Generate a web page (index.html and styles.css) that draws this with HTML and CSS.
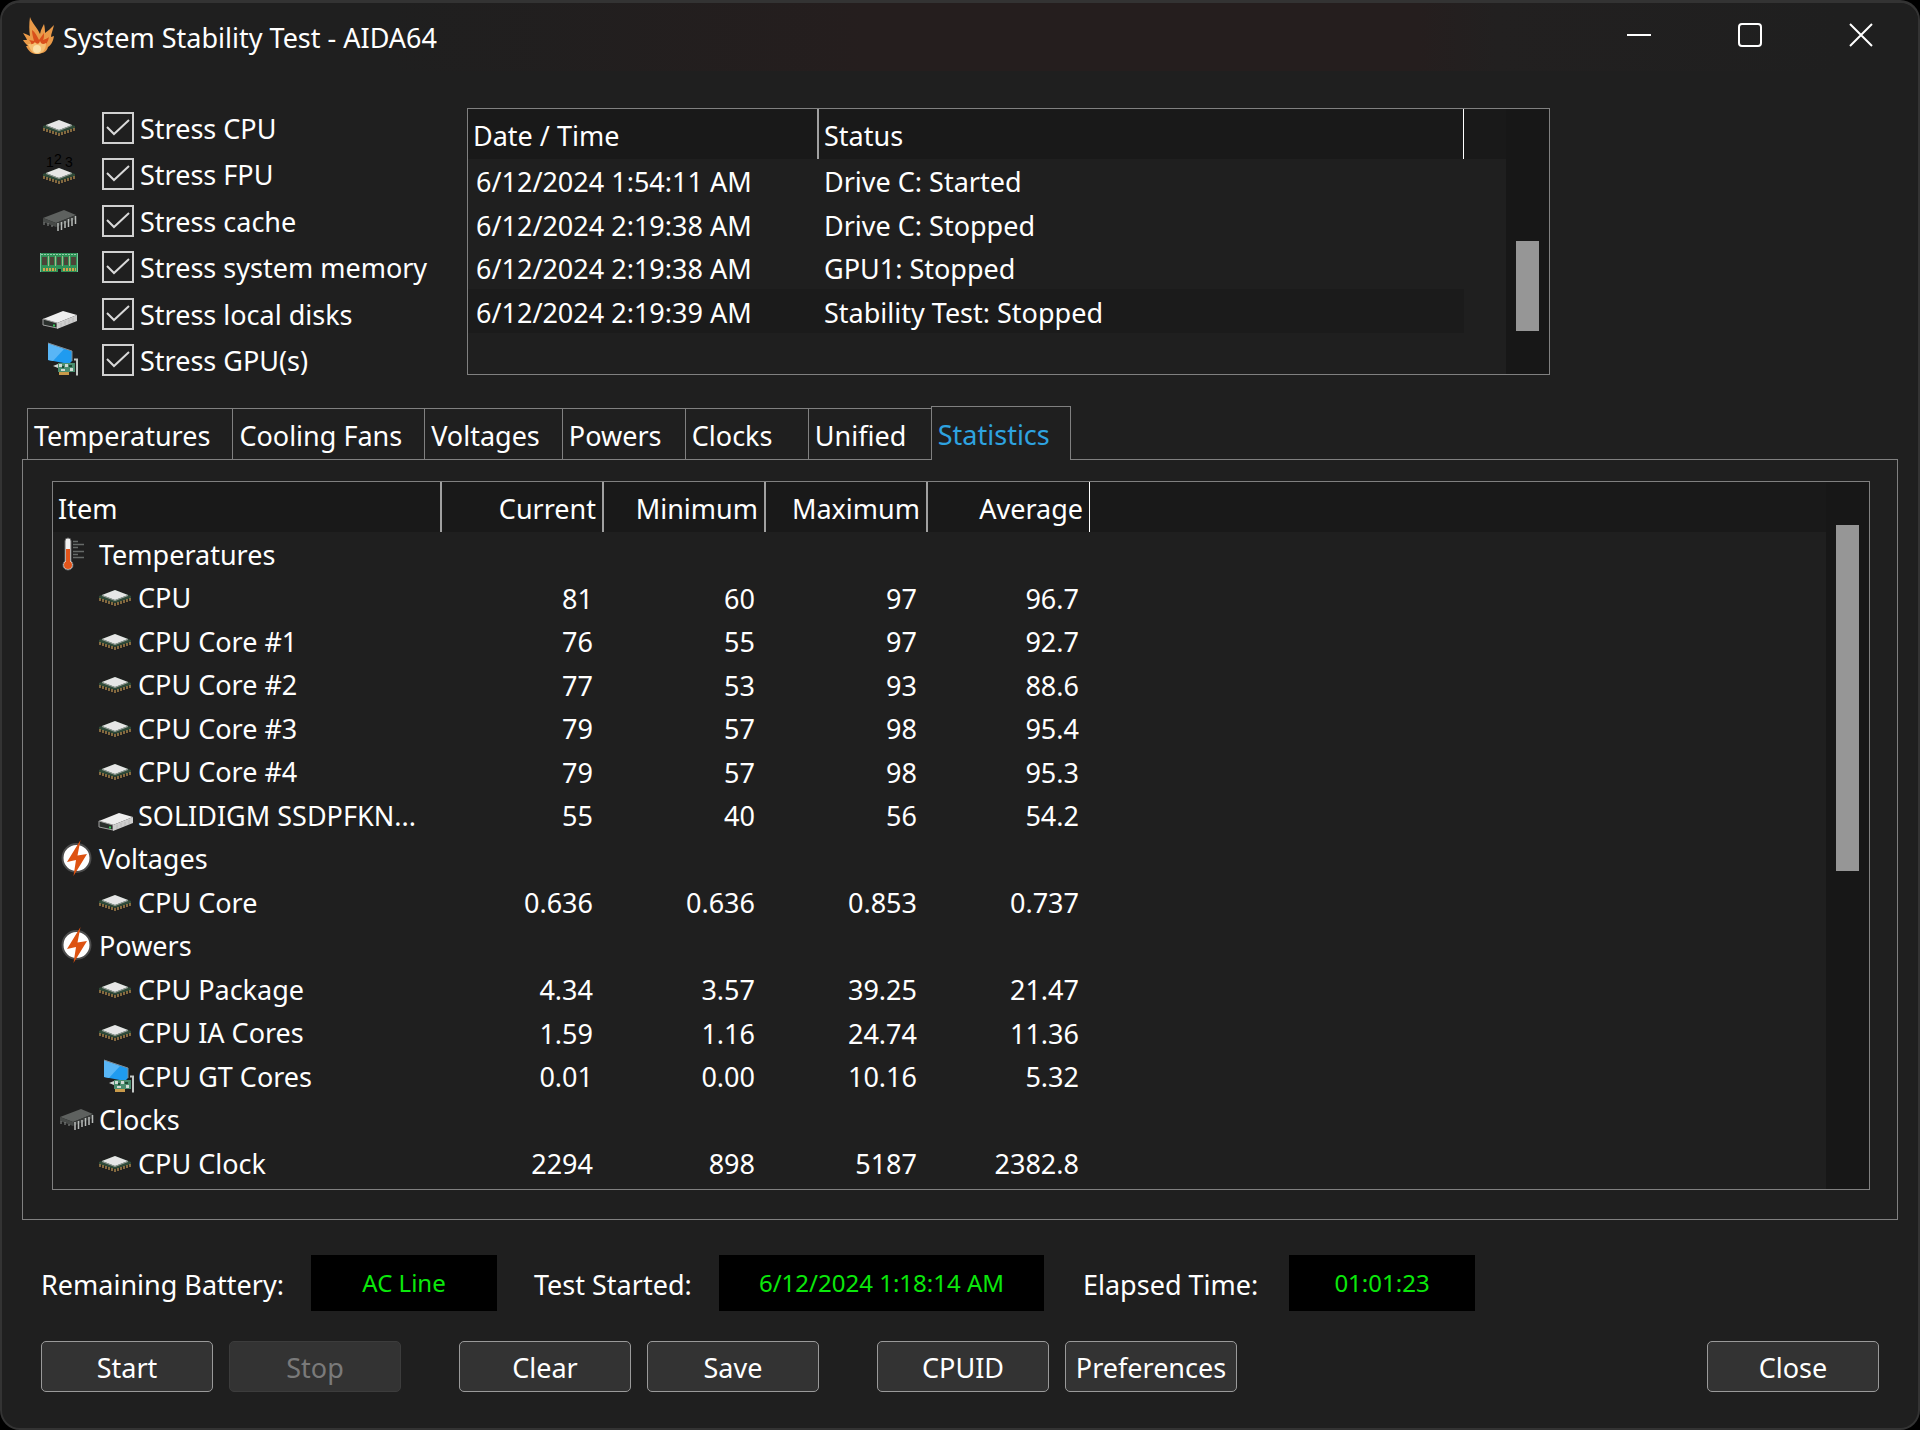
FILE: index.html
```html
<!DOCTYPE html>
<html lang="en">

<head>
  <meta charset="UTF-8">
  <meta name="viewport" content="width=device-width, initial-scale=1.0">
  <title>System Stability Test - AIDA64</title>
  <link rel="stylesheet" href="styles.css">
</head>

<body>
  <!-- shared icons -->
  <svg class="sprite" aria-hidden="true">
    <symbol id="cpu" viewBox="0 0 40 40">
      <path d="M4 18 L20 12 L36 18 L36 20 L20 25 L4 20Z" fill="#2f4a38" />
      <path d="M5 20v3M8 21v3M11 22v3M14 23v3M17 24v3M20 25v3M23 24v3M26 23v3M29 22v3M32 21v3M35 20v3" stroke="#c69a55" stroke-width="1.2" />
      <path d="M7 17 L20 12 L33 17 L20 22Z" fill="#e6e6e6" />
      <path d="M7 17 L20 22 L33 17 V18 L20 23 L7 18Z" fill="#9aa09c" />
    </symbol>
    <symbol id="fpu" viewBox="0 0 40 40">
      <text x="7" y="13" class="fpu-digit">1</text>
      <text x="15" y="10" class="fpu-digit">2</text>
      <text x="26" y="13" class="fpu-digit">3</text>
      <use href="#cpu" x="0" y="2" width="40" height="40" />
    </symbol>
    <symbol id="chip" viewBox="0 0 40 40">
      <path d="M4 17 L25 9 L37 14 L17 22Z" fill="#5e615f" />
      <path d="M4 17 L17 22 V26 L4 21Z" fill="#474a48" />
      <path d="M17 22 L37 14 V18 L17 26Z" fill="#3a3c3b" />
      <path d="M19 22v8M22.500 21v8M26 20v7M29.500 18v8M33 17v8M36.500 15v8" stroke="#b9bcba" stroke-width="1.500" />
      <path d="M5 21v3M9 22v3M13 24v2" stroke="#8b8e8c" />
    </symbol>
    <symbol id="ram" viewBox="0 0 40 40">
      <path d="M1 6 H39 V25 H22 V22 H19 V25 H1Z" fill="#2f9257" />
      <path d="M2 7.500H38" stroke="#8fceaa" stroke-dasharray="2 1" />
      <path d="M3 10h5v8h-5zM11 10h4v8h-4zM18 10h4v8h-4zM25 10h4v8h-4zM32 10h5v8h-5z" fill="#4c4438" />
      <path d="M9.500 9v10M16.500 9v10M23.500 9v10M30.500 9v10" stroke="#a3b88c" />
      <path d="M4 22.500h13M24 22.500h13" stroke="#d2a24c" stroke-width="3" stroke-dasharray="2 1" />
      <path d="M1.500 6V25M38.500 6V25" stroke="#74c59a" />
    </symbol>
    <symbol id="disk" viewBox="0 0 40 40">
      <path d="M4 25 L24 17 L38 21 L18 29Z" fill="#eeeeee" />
      <path d="M4 25 L18 29 V34 L4 31Z" fill="#2a2f2c" stroke="#a2a2a2" />
      <path d="M18 29 L38 21 V27 L18 35Z" fill="#cdcdcd" />
      <path d="M22 29v4M26 27v4M30 26v4M34 24v4" stroke="#b8b8b8" />
      <path d="M14 31.500h2" stroke="#38c85a" stroke-width="2" />
    </symbol>
    <symbol id="gpu" viewBox="0 0 40 40">
      <path d="M9 3 L33 11 V21 L30 24 L9 20Z" fill="#1f9bf0" />
      <path d="M9 3 L25 9 L14 21 L9 20Z" fill="#59b6f6" />
      <path d="M9 3 L33 11 V21" fill="none" stroke="#7f8b93" />
      <path d="M14 26 l5-2 v4z" fill="#d3d8d5" />
      <path d="M19 23h17v9h-17z" fill="#4b8d6f" />
      <path d="M20 24h3v3h-3zM26 24h3v3h-3zM31 28h3v3h-3zM22 29h4v2h-4z" fill="#cfdad4" />
      <path d="M23 27h2M30 26h3" stroke="#1f4a34" stroke-width="2" />
      <path d="M20 33.500h10" stroke="#c99a4a" stroke-width="3" />
      <path d="M35 19.500h3 V35.500" fill="none" stroke="#c4c8c6" stroke-width="2" />
    </symbol>
    <symbol id="thermo" viewBox="0 0 40 40">
      <path d="M9 6 a3 3 0 0 1 6 0 V26 a5 5 0 1 1 -6 0Z" fill="#f1f1f1" stroke="#6b6b6b" />
      <path d="M12 14V29" stroke="#e2551b" stroke-width="4" />
      <circle cx="12" cy="30" r="4" fill="#e2551b" />
      <path d="M17 6.500h5M17 9.500h11M17 12.500h5M17 16.500h11M17 19.500h5M17 22.500h11" stroke="#666a68" stroke-width="1.500" />
    </symbol>
    <symbol id="bolt" viewBox="0 0 40 40">
      <circle cx="20.500" cy="19" r="14" fill="#fff" stroke="#4c4c4c" stroke-width="2" />
      <path d="M24.500 1 L11 23 L20 21 L17.500 37 L31 15 L21.500 16.500Z" fill="#dd5211" />
    </symbol>
  </svg>

  <div class="window">
    <header class="titlebar">
      <svg class="flame" viewBox="0 0 34 40" aria-hidden="true">
        <path d="M8 0 C10 6 15 10 18 17 C19 12 21 9 22 7 C23 11 23 14 23 16 C26 14 29 11 32 8 C31 13 29 17 29 20 L32 19 C31 25 29 28 26 30 C25 35 20 37 14 37 C9 37 6 33 4 29 L6 29 C4 27 2 25 1 23 L5 23 C4 20 2 18 1 16 C4 17 6 18 8 19 C7 13 7 7 8 0Z" fill="#ea9a48" />
        <path d="M10 13 C13 15 15 19 17 23 L22 16 C22 19 22 21 21 23 C24 22 26 21 27 20 C26 25 24 28 21 29 L9 29 C10 27 9 25 7 23 L12 24 C11 20 10 17 10 13Z" fill="#d94f1b" />
        <path d="M6 27 C9 27 11 28 13 25 C14 27 17 28 18 24 C19 27 21 28 24 26 C24 33 20 37 15 37 C10 36 8 32 6 27Z" fill="#f6be70" />
        <circle cx="15" cy="32" r="4" fill="#fbe0a8" />
      </svg>
      <h1>System Stability Test - AIDA64</h1>
      <div class="window-controls">
        <button type="button" aria-label="Minimize">
          <svg viewBox="0 0 24 24"><path d="M0 12H24" /></svg>
        </button>
        <button type="button" aria-label="Maximize">
          <svg viewBox="0 0 24 24"><rect x="1" y="1" width="22" height="22" rx="3" /></svg>
        </button>
        <button type="button" aria-label="Close window">
          <svg viewBox="0 0 24 24"><path d="M1 1L23 23M23 1L1 23" /></svg>
        </button>
      </div>
    </header>

    <section class="top">
      <div class="stress-list">
        <div class="stress">
          <svg class="icon"><use href="#cpu" /></svg>
          <input type="checkbox" id="s-cpu" checked><label for="s-cpu">Stress CPU</label>
        </div>
        <div class="stress">
          <svg class="icon"><use href="#fpu" /></svg>
          <input type="checkbox" id="s-fpu" checked><label for="s-fpu">Stress FPU</label>
        </div>
        <div class="stress">
          <svg class="icon"><use href="#chip" /></svg>
          <input type="checkbox" id="s-cache" checked><label for="s-cache">Stress cache</label>
        </div>
        <div class="stress">
          <svg class="icon"><use href="#ram" /></svg>
          <input type="checkbox" id="s-mem" checked><label for="s-mem">Stress system memory</label>
        </div>
        <div class="stress">
          <svg class="icon"><use href="#disk" /></svg>
          <input type="checkbox" id="s-disk" checked><label for="s-disk">Stress local disks</label>
        </div>
        <div class="stress">
          <svg class="icon"><use href="#gpu" /></svg>
          <input type="checkbox" id="s-gpu" checked><label for="s-gpu">Stress GPU(s)</label>
        </div>
      </div>

      <div class="list log">
        <table>
          <colgroup>
            <col class="col-date">
            <col class="col-status">
            <col>
          </colgroup>
          <thead>
            <tr><th>Date / Time</th><th>Status</th><td></td></tr>
          </thead>
          <tbody>
            <tr><td>6/12/2024 1:54:11 AM</td><td>Drive C: Started</td></tr>
            <tr><td>6/12/2024 2:19:38 AM</td><td>Drive C: Stopped</td></tr>
            <tr><td>6/12/2024 2:19:38 AM</td><td>GPU1: Stopped</td></tr>
            <tr class="selected"><td>6/12/2024 2:19:39 AM</td><td>Stability Test: Stopped</td></tr>
          </tbody>
        </table>
        <div class="scrollbar"><div class="thumb"></div></div>
      </div>
    </section>

    <div class="tabs" role="tablist">
      <button type="button" role="tab">Temperatures</button>
      <button type="button" role="tab">Cooling Fans</button>
      <button type="button" role="tab">Voltages</button>
      <button type="button" role="tab">Powers</button>
      <button type="button" role="tab">Clocks</button>
      <button type="button" role="tab">Unified</button>
      <button type="button" role="tab" class="active" aria-selected="true">Statistics</button>
    </div>

    <main class="panel" role="tabpanel">
      <div class="list stats">
        <table>
          <colgroup>
            <col class="col-item">
            <col class="col-num">
            <col class="col-num">
            <col class="col-num">
            <col class="col-num">
            <col>
          </colgroup>
          <thead>
            <tr><th>Item</th><th>Current</th><th>Minimum</th><th>Maximum</th><th>Average</th><td></td></tr>
          </thead>
          <tbody>
            <tr class="group"><td><div class="item"><svg class="icon"><use href="#thermo" /></svg>Temperatures</div></td></tr>
            <tr><td><div class="item"><svg class="icon"><use href="#cpu" /></svg>CPU</div></td><td>81</td><td>60</td><td>97</td><td>96.7</td></tr>
            <tr><td><div class="item"><svg class="icon"><use href="#cpu" /></svg>CPU Core #1</div></td><td>76</td><td>55</td><td>97</td><td>92.7</td></tr>
            <tr><td><div class="item"><svg class="icon"><use href="#cpu" /></svg>CPU Core #2</div></td><td>77</td><td>53</td><td>93</td><td>88.6</td></tr>
            <tr><td><div class="item"><svg class="icon"><use href="#cpu" /></svg>CPU Core #3</div></td><td>79</td><td>57</td><td>98</td><td>95.4</td></tr>
            <tr><td><div class="item"><svg class="icon"><use href="#cpu" /></svg>CPU Core #4</div></td><td>79</td><td>57</td><td>98</td><td>95.3</td></tr>
            <tr><td><div class="item"><svg class="icon"><use href="#disk" /></svg>SOLIDIGM SSDPFKN...</div></td><td>55</td><td>40</td><td>56</td><td>54.2</td></tr>
            <tr class="group"><td><div class="item"><svg class="icon"><use href="#bolt" /></svg>Voltages</div></td></tr>
            <tr><td><div class="item"><svg class="icon"><use href="#cpu" /></svg>CPU Core</div></td><td>0.636</td><td>0.636</td><td>0.853</td><td>0.737</td></tr>
            <tr class="group"><td><div class="item"><svg class="icon"><use href="#bolt" /></svg>Powers</div></td></tr>
            <tr><td><div class="item"><svg class="icon"><use href="#cpu" /></svg>CPU Package</div></td><td>4.34</td><td>3.57</td><td>39.25</td><td>21.47</td></tr>
            <tr><td><div class="item"><svg class="icon"><use href="#cpu" /></svg>CPU IA Cores</div></td><td>1.59</td><td>1.16</td><td>24.74</td><td>11.36</td></tr>
            <tr><td><div class="item"><svg class="icon"><use href="#gpu" /></svg>CPU GT Cores</div></td><td>0.01</td><td>0.00</td><td>10.16</td><td>5.32</td></tr>
            <tr class="group"><td><div class="item"><svg class="icon"><use href="#chip" /></svg>Clocks</div></td></tr>
            <tr><td><div class="item"><svg class="icon"><use href="#cpu" /></svg>CPU Clock</div></td><td>2294</td><td>898</td><td>5187</td><td>2382.8</td></tr>
          </tbody>
        </table>
        <div class="scrollbar"><div class="thumb"></div></div>
      </div>
    </main>

    <footer>
      <div class="status">
        <span class="label-battery">Remaining Battery:</span>
        <output class="short">AC Line</output>
        <span class="label-started">Test Started:</span>
        <output class="long">6/12/2024 1:18:14 AM</output>
        <span class="label-elapsed">Elapsed Time:</span>
        <output class="short">01:01:23</output>
      </div>
      <div class="actions">
        <div class="pair">
          <button type="button">Start</button>
          <button type="button" disabled>Stop</button>
        </div>
        <div class="pair">
          <button type="button">Clear</button>
          <button type="button">Save</button>
        </div>
        <div class="pair">
          <button type="button">CPUID</button>
          <button type="button">Preferences</button>
        </div>
        <button type="button" class="close">Close</button>
      </div>
    </footer>
  </div>
</body>

</html>
```
FILE: styles.css
```css
* {
  box-sizing: border-box;
}

body {
  margin: 0;
  background: #000;
  color: #fff;
  font-family: "Noto Sans", "Open Sans", sans-serif;
  font-size: 27px;
  line-height: 40px;
}

button {
  font: inherit;
  color: inherit;
  padding: 0;
}

.sprite {
  display: none;
}

.fpu-digit {
  font-family: "Liberation Sans", sans-serif;
  font-size: 14px;
  fill: #000;
}

.icon {
  width: 40px;
  height: 40px;
  flex: none;
}

.window {
  display: flex;
  flex-direction: column;
  min-height: 100vh;
  background: #1f1f1f;
  border: 2px solid #333;
  border-top-width: 3px;
  border-radius: 20px;
  overflow: hidden;
}

/* title bar */
.titlebar {
  display: flex;
  align-items: center;
  height: 68px;
  padding: 0 2px 0 20px;
  background: linear-gradient(90deg, #1f1f1f 20%, #251e1e 45%, #251e1e 74%, #222020 78%, #1f1f1f 96%);
}

.flame {
  width: 34px;
  height: 40px;
}

h1 {
  margin: 0 0 0 7px;
  padding-top: 2px;
  font-size: 27px;
  font-weight: 400;
}

.window-controls {
  display: flex;
  margin-left: auto;
}

.window-controls button {
  width: 111px;
  height: 68px;
  border: 0;
  background: none;
}

.window-controls svg {
  width: 24px;
  height: 24px;
  fill: none;
  stroke: #fff;
  stroke-width: 2;
}

/* stress options and log */
.top {
  display: flex;
  align-items: flex-start;
  padding: 37px 40px 0 37px;
}

.stress-list {
  display: flex;
  flex-direction: column;
  justify-content: space-between;
  flex: none;
  width: 428px;
  height: 272px;
}

.stress {
  display: flex;
  align-items: center;
}

.stress label {
  padding-top: 2px;
  line-height: 38px;
}

.stress input {
  appearance: none;
  width: 32px;
  height: 32px;
  margin: 0 6px 0 23px;
  border: 2px solid #d0d0d0;
  background: url("data:image/svg+xml,%3Csvg xmlns='http://www.w3.org/2000/svg' viewBox='0 0 28 28'%3E%3Cpath d='M3 13L10 20L25 6' fill='none' stroke='%23d8d8d8' stroke-width='2'/%3E%3C/svg%3E");
}

/* list views */
.list {
  display: flex;
  border: 1px solid #808080;
}

.list table {
  flex: 1;
  align-self: flex-start;
  table-layout: fixed;
  border-collapse: separate;
  border-spacing: 0;
  white-space: nowrap;
}

thead {
  background: #191919;
}

thead tr {
  height: 50px;
}

th {
  padding: 4px 6px 0 5px;
  border-right: 2px solid #a0a0a0;
  font-weight: 400;
  text-align: left;
}

th:last-of-type {
  border-right: 1px solid #fff;
}

tbody tr {
  height: 43px;
}

tbody tr:nth-child(even) {
  height: 44px;
}

tbody td {
  padding: 3px 11px 0 8px;
}

.log {
  flex: 0 1 1083px;
  height: 267px;
}

.col-date {
  width: 351px;
}

.col-status {
  width: 645px;
}

.selected td {
  background: #1b1b1b;
}

.log td:nth-child(2) {
  padding-left: 5px;
}

.scrollbar {
  flex: none;
  width: 43px;
  padding: 132px 10px 0 10px;
  background: #171717;
}

.thumb {
  height: 90px;
  background: #969696;
}

/* tabs */
.tabs {
  display: flex;
  align-items: flex-end;
  padding: 26px 25px 0;
}

.tabs button {
  min-width: 124px;
  height: 51px;
  margin-right: -1px;
  padding: 3px 22px 0 6px;
  border: 1px solid #808080;
  border-bottom: 0;
  background: #1f1f1f;
  text-align: left;
}

.tabs .active {
  z-index: 1;
  height: 54px;
  margin-bottom: -1px;
  padding-right: 20px;
  color: #2ea3e0;
}

.panel {
  display: flex;
  flex: 1;
  margin: 0 20px;
  padding: 21px 27px 29px 29px;
  border: 1px solid #808080;
}

.stats {
  flex: 1;
}

.col-item {
  width: 389px;
}

.col-num {
  width: 162px;
}

.stats th:nth-child(n + 2),
.stats td:nth-child(n + 2) {
  text-align: right;
}

.stats tbody td:first-child {
  padding: 2px 0 0 42px;
}

.stats tbody .group td:first-child {
  padding-left: 3px;
}

.item {
  display: flex;
  align-items: center;
  gap: 3px;
}

.stats .scrollbar {
  padding-top: 43px;
}

.stats .thumb {
  height: 346px;
}

/* footer */
footer {
  padding: 35px 39px 36px;
}

.status {
  display: flex;
  align-items: center;
}

.status span {
  padding-top: 3px;
}

.label-battery {
  width: 270px;
}

.label-started {
  width: 185px;
  margin-left: 37px;
}

.label-elapsed {
  width: 206px;
  margin-left: 39px;
}

output {
  height: 56px;
  background: #000;
  color: #0be80b;
  font-size: 24px;
  line-height: 56px;
  text-align: center;
}

output.short {
  width: 186px;
}

output.long {
  width: 325px;
}

.actions {
  display: flex;
  gap: 58px;
  margin-top: 30px;
}

.pair {
  display: flex;
  gap: 16px;
}

.actions button {
  width: 172px;
  height: 51px;
  padding-top: 3px;
  border: 1px solid #9a9a9a;
  border-radius: 5px;
  background: #333;
}

.actions button:disabled {
  border-color: #3c3c3c;
  color: #7a7a7a;
}

.actions .close {
  margin-left: auto;
}
```
